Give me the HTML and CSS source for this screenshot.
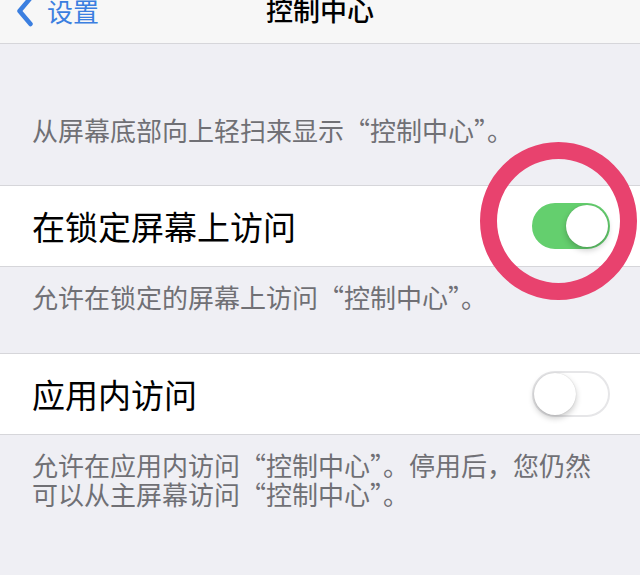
FILE: index.html
```html
<!DOCTYPE html>
<html lang="zh-CN">
<head>
    <meta charset="UTF-8">
    <meta name="viewport" content="width=device-width, initial-scale=1.0">
    <title>控制中心</title>
    <link rel="stylesheet" href="styles.css">
</head>
<body>
    <div class="page">
        <div class="nav">
            <a class="back" href="#">
                <svg class="chevron" width="18" height="32" viewBox="0 0 18 32">
                    <path d="M14.5 3 L3.5 16 L14.5 29" fill="none" stroke="#3b7fe0" stroke-width="4.5" stroke-linecap="round" stroke-linejoin="round"/>
                </svg>
                <span>设置</span>
            </a>
            <div class="title">控制中心</div>
        </div>

        <div class="note note-top">从屏幕底部向上轻扫来显示“控制中心”。</div>

        <div class="group">
            <div class="row">
                <span class="label">在锁定屏幕上访问</span>
                <div class="switch on"><div class="knob"></div></div>
            </div>
        </div>
        <div class="note">允许在锁定的屏幕上访问“控制中心”。</div>

        <div class="group">
            <div class="row">
                <span class="label">应用内访问</span>
                <div class="switch"><div class="knob"></div></div>
            </div>
        </div>
        <div class="note">允许在应用内访问“控制中心”。停用后，您仍然<br>可以从主屏幕访问“控制中心”。</div>

        <!-- hand drawn highlight over the first switch -->
        <div class="ring"></div>
    </div>
</body>
</html>
```

FILE: styles.css
```css
body {
    margin: 0;
    background-color: #efeff4;
    font-family: "Noto Sans CJK SC", "Noto Sans", sans-serif;
}
.page {
    position: relative;
    width: 640px;
    height: 575px;
    overflow: hidden;
}
.nav {
    position: relative;
    height: 44px;
    box-sizing: border-box;
    padding-bottom: 24px;
    background-color: #f7f7f7;
    border-bottom: 1px solid #d6d6da;
    display: flex;
    align-items: center;
    justify-content: center;
}
.back {
    position: absolute;
    left: 16px;
    top: -5px;
    display: flex;
    align-items: center;
    gap: 13px;
    color: #3b7fe0;
    text-decoration: none;
    font-size: 26px;
    line-height: 30px;
}
.title {
    font-size: 27px;
    line-height: 20px;
    color: #000;
    font-weight: 500;
}
.note {
    padding: 15px 32px 42px;
    font-size: 26px;
    line-height: 29px;
    color: #707075;
}
.note-top {
    padding-top: 71px;
    padding-bottom: 41px;
}
.group {
    background-color: #fff;
    border-top: 1px solid #d6d6da;
    border-bottom: 1px solid #d6d6da;
}
.row {
    height: 80px;
    padding: 0 30px 0 32px;
    display: flex;
    align-items: center;
    justify-content: space-between;
}
.label {
    font-size: 33px;
    color: #000;
}
.switch {
    position: relative;
    width: 78px;
    height: 46px;
    box-sizing: border-box;
    border-radius: 23px;
    border: 2px solid #e6e6e8;
    background-color: #fff;
}
.switch .knob {
    position: absolute;
    left: 0;
    top: 0;
    width: 42px;
    height: 42px;
    border-radius: 50%;
    background-color: #fff;
    box-shadow: 0 3px 6px rgba(0,0,0,0.22), 0 0 1px rgba(0,0,0,0.2);
}
.switch.on {
    background-color: #64cf6e;
    border-color: #64cf6e;
}
.switch.on .knob {
    left: 32px;
}
.ring {
    position: absolute;
    left: 480px;
    top: 142px;
    width: 157px;
    height: 158px;
    box-sizing: border-box;
    border: 17px solid #e8426e;
    border-radius: 50%;
}
```
